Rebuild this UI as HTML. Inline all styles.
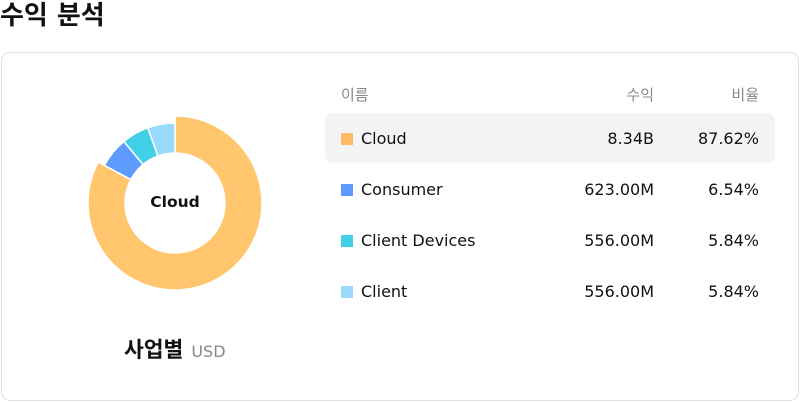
<!DOCTYPE html>
<html><head><meta charset="utf-8"><style>
*{margin:0;padding:0;box-sizing:border-box}
body{width:800px;height:402px;background:#fff;font-family:"DejaVu Sans","Liberation Sans","Noto Sans CJK KR",sans-serif;color:#111;position:relative;overflow:hidden}
.title{position:absolute;left:0;top:1px;font-size:26px;font-weight:bold;line-height:30px;font-family:"DejaVu Sans","Noto Sans CJK KR",sans-serif}
.card{position:absolute;left:1px;top:52px;width:798px;height:349px;border:1px solid #e0e0e8;border-radius:9px}
svg{position:absolute;left:0;top:0}
.sub{position:absolute;left:124px;top:335px;font-size:21.5px;font-weight:bold;font-family:"Noto Sans CJK KR",sans-serif;line-height:28px}
.sub span{font-size:16px;font-weight:normal;color:#888;margin-left:8px;font-family:"DejaVu Sans",sans-serif}
.hd{position:absolute;top:85px;font-size:15px;color:#888;line-height:20px;font-family:"DejaVu Sans","Noto Sans CJK KR",sans-serif}
.hl{position:absolute;left:325px;top:113px;width:450px;height:50px;background:#f4f4f4;border-radius:8px}
.row{position:absolute;left:0;width:800px;height:20px;font-size:16px;line-height:20px}
.sq{position:absolute;left:341px;top:4px;width:12px;height:12px}
.nm{position:absolute;left:361px}
.rv{position:absolute;right:146px}
.pc{position:absolute;right:41px}
</style></head><body>
<div class="title">수익 분석</div>
<div class="card"></div>
<svg width="800" height="402">
<g stroke="#fff" stroke-width="1.5" stroke-linejoin="round">
<path d="M175 116 A87 87 0 1 1 98.19 162.15 L130.85 179.52 A50 50 0 1 0 175 153 Z" fill="#FFC66E"/>
<path d="M104.37 165.44 A80 80 0 0 1 123.9 141.45 L143.06 164.53 A50 50 0 0 0 130.85 179.52 Z" fill="#5E9BFF"/>
<path d="M123.9 141.45 A80 80 0 0 1 147.77 127.78 L157.98 155.98 A50 50 0 0 0 143.06 164.53 Z" fill="#42D0E6"/>
<path d="M147.77 127.78 A80 80 0 0 1 175 123 L175 153 A50 50 0 0 0 157.98 155.98 Z" fill="#98D9FC"/>
</g>
<text x="175" y="207" text-anchor="middle" font-family="DejaVu Sans,sans-serif" font-weight="bold" font-size="15.5" fill="#111">Cloud</text>
</svg>
<div class="sub">사업별<span>USD</span></div>
<div class="hd" style="left:341px">이름</div>
<div class="hd" style="right:146px">수익</div>
<div class="hd" style="right:41px">비율</div>
<div class="hl"></div>
<div class="row" style="top:129px"><div class="sq" style="background:#FFBA66"></div><div class="nm">Cloud</div><div class="rv">8.34B</div><div class="pc">87.62%</div></div>
<div class="row" style="top:180px"><div class="sq" style="background:#5E9BFF"></div><div class="nm">Consumer</div><div class="rv">623.00M</div><div class="pc">6.54%</div></div>
<div class="row" style="top:231px"><div class="sq" style="background:#42D0E6"></div><div class="nm">Client Devices</div><div class="rv">556.00M</div><div class="pc">5.84%</div></div>
<div class="row" style="top:282px"><div class="sq" style="background:#98D9FC"></div><div class="nm">Client</div><div class="rv">556.00M</div><div class="pc">5.84%</div></div>
</body></html>
